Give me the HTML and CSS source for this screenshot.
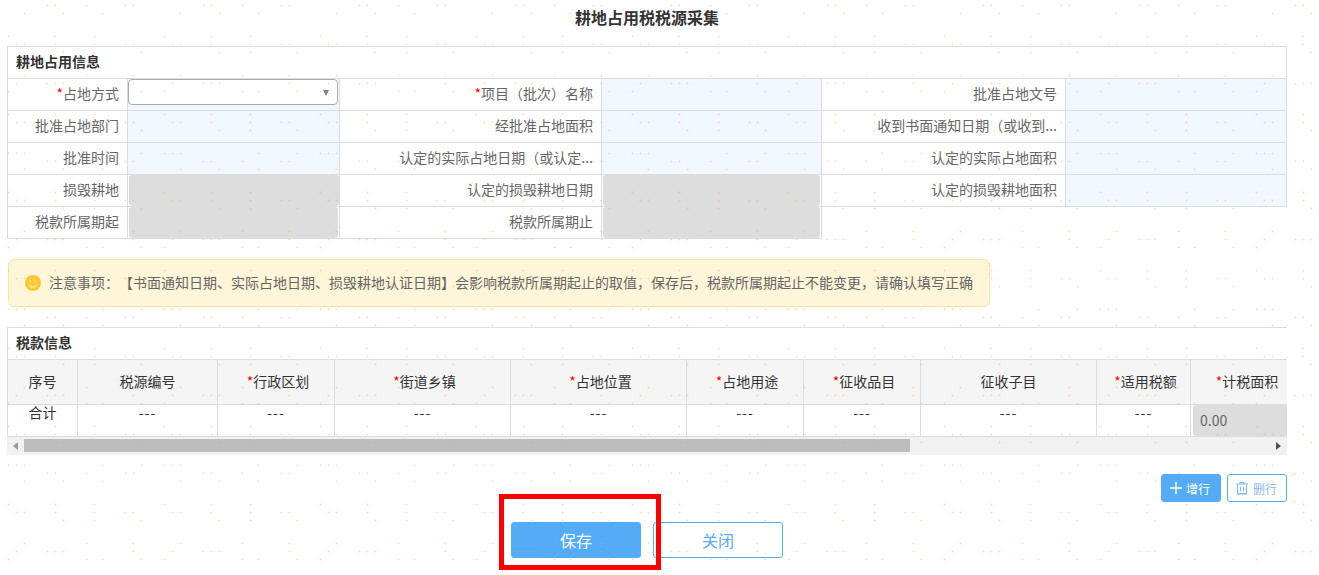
FILE: index.html
```html
<!DOCTYPE html>
<html lang="zh-CN">
<head>
<meta charset="utf-8">
<title>耕地占用税税源采集</title>
<link rel="stylesheet" href="styles.css">
</head>
<body>
<div class="page">
  <h1 class="page-title">耕地占用税税源采集</h1>

  <section class="form-section">
    <h2 class="section-title boxed">耕地占用信息</h2>
    <div class="form-grid">
      <div class="label"><i class="req">*</i>占地方式</div>
      <div class="field field-blue">
        <div class="select"><span class="select-arrow"></span></div>
      </div>
      <div class="label"><i class="req">*</i>项目（批次）名称</div>
      <div class="field field-blue"></div>
      <div class="label">批准占地文号</div>
      <div class="field field-blue"></div>

      <div class="label">批准占地部门</div>
      <div class="field field-blue"></div>
      <div class="label">经批准占地面积</div>
      <div class="field field-blue"></div>
      <div class="label">收到书面通知日期（或收到...</div>
      <div class="field field-blue"></div>

      <div class="label">批准时间</div>
      <div class="field field-blue"></div>
      <div class="label">认定的实际占地日期（或认定...</div>
      <div class="field field-blue"></div>
      <div class="label">认定的实际占地面积</div>
      <div class="field field-blue"></div>

      <div class="label">损毁耕地</div>
      <div class="field"><div class="disabled"></div></div>
      <div class="label">认定的损毁耕地日期</div>
      <div class="field"><div class="disabled inset"></div></div>
      <div class="label">认定的损毁耕地面积</div>
      <div class="field field-blue"></div>

      <div class="label">税款所属期起</div>
      <div class="field"><div class="disabled inset"></div></div>
      <div class="label">税款所属期止</div>
      <div class="field"><div class="disabled inset"></div></div>
    </div>
  </section>

  <div class="notice">
    <svg class="smile" viewBox="0 0 16 16" width="16" height="16" aria-hidden="true">
      <circle cx="8" cy="8" r="8" fill="#fcc832"/>
      <circle cx="5.300" cy="6" r="1" fill="#ffe9a8"/>
      <circle cx="10.700" cy="6" r="1" fill="#ffe9a8"/>
      <path d="M4 9.400c.9 1.800 2.400 2.700 4 2.700s3.100-.9 4-2.700" fill="none" stroke="#ffe9a8" stroke-width="1.100" stroke-linecap="round"/>
    </svg>
    <span>注意事项：【书面通知日期、实际占地日期、损毁耕地认证日期】会影响税款所属期起止的取值，保存后，税款所属期起止不能变更，请确认填写正确</span>
  </div>

  <section class="tax-section">
    <h2 class="section-title open">税款信息</h2>
    <div class="table-clip">
      <div class="tax-grid">
        <div class="th">序号</div>
        <div class="th">税源编号</div>
        <div class="th"><i class="req">*</i>行政区划</div>
        <div class="th"><i class="req">*</i>街道乡镇</div>
        <div class="th"><i class="req">*</i>占地位置</div>
        <div class="th"><i class="req">*</i>占地用途</div>
        <div class="th"><i class="req">*</i>征收品目</div>
        <div class="th">征收子目</div>
        <div class="th"><i class="req">*</i>适用税额</div>
        <div class="th"><i class="req">*</i>计税面积</div>

        <div class="td">合计</div>
        <div class="td dash">---</div>
        <div class="td dash">---</div>
        <div class="td dash">---</div>
        <div class="td dash">---</div>
        <div class="td dash">---</div>
        <div class="td dash">---</div>
        <div class="td dash">---</div>
        <div class="td dash">---</div>
        <div class="td td-input"><div class="disabled amount">0.00</div></div>
      </div>
    </div>
    <div class="scrollbar">
      <span class="scroll-btn"><span class="arrow-left"></span></span>
      <div class="scroll-track"><div class="scroll-thumb"></div></div>
      <span class="scroll-btn"><span class="arrow-right"></span></span>
    </div>
  </section>

  <div class="row-actions">
    <button class="mini-btn mini-primary" type="button">
      <svg viewBox="0 0 12 12" width="12" height="12" aria-hidden="true"><path d="M6 0v12M0 6h12" fill="none" stroke="#fff" stroke-width="1.400"/></svg>
      增行
    </button>
    <button class="mini-btn mini-outline" type="button">
      <svg viewBox="0 0 14 14" width="14" height="14" aria-hidden="true"><path d="M1 3h12M5 3V1.500h4V3M2.500 3v10h9V3M5.500 6v4.500M8.500 6v4.500M2.500 12.500h9" fill="none" stroke="#7dbcf5" stroke-width="1.100"/></svg>
      删行
    </button>
  </div>

  <div class="footer-actions">
    <div class="save-wrap">
      <button class="btn btn-primary" type="button">保存</button>
      <div class="highlight"></div>
    </div>
    <button class="btn btn-outline" type="button">关闭</button>
  </div>
</div>

<svg class="watermark" width="100%" height="100%" aria-hidden="true">
  <defs>
    <g id="dot">
      <path d="M-1 0h1v1h-1zM1 0h1v1h-1zM0 -1h1v1h-1zM0 1h1v1h-1z" fill="#ff965a" fill-opacity=".14"/>
      <path d="M0 0h1v1h-1z" fill="#ff965a" fill-opacity=".38"/>
    </g>
    <pattern id="dots" width="156" height="156" patternUnits="userSpaceOnUse">
      <use href="#dot" x="47" y="5"/><use href="#dot" x="55" y="5"/><use href="#dot" x="86" y="5"/><use href="#dot" x="125" y="5"/><use href="#dot" x="133" y="5"/>
      <use href="#dot" x="24" y="13"/><use href="#dot" x="63" y="13"/><use href="#dot" x="102" y="13"/>
      <use href="#dot" x="8" y="36"/><use href="#dot" x="55" y="36"/><use href="#dot" x="94" y="36"/>
      <use href="#dot" x="16" y="44"/><use href="#dot" x="24" y="44"/><use href="#dot" x="55" y="44"/><use href="#dot" x="94" y="44"/><use href="#dot" x="125" y="44"/><use href="#dot" x="133" y="44"/>
      <use href="#dot" x="63" y="52"/><use href="#dot" x="94" y="52"/><use href="#dot" x="141" y="52"/>
      <use href="#dot" x="24" y="75"/><use href="#dot" x="86" y="75"/><use href="#dot" x="133" y="75"/>
      <use href="#dot" x="16" y="83"/><use href="#dot" x="47" y="83"/><use href="#dot" x="55" y="83"/><use href="#dot" x="63" y="83"/><use href="#dot" x="133" y="83"/>
      <use href="#dot" x="8" y="91"/><use href="#dot" x="86" y="91"/><use href="#dot" x="102" y="91"/><use href="#dot" x="141" y="91"/>
      <use href="#dot" x="8" y="114"/><use href="#dot" x="55" y="114"/><use href="#dot" x="94" y="114"/>
      <use href="#dot" x="16" y="122"/><use href="#dot" x="24" y="122"/><use href="#dot" x="55" y="122"/><use href="#dot" x="94" y="122"/><use href="#dot" x="125" y="122"/><use href="#dot" x="133" y="122"/>
      <use href="#dot" x="63" y="130"/><use href="#dot" x="94" y="130"/><use href="#dot" x="141" y="130"/>
      <use href="#dot" x="8" y="153"/><use href="#dot" x="16" y="153"/><use href="#dot" x="24" y="153"/><use href="#dot" x="102" y="153"/><use href="#dot" x="141" y="153"/>
    </pattern>
  </defs>
  <rect width="100%" height="100%" fill="url(#dots)" shape-rendering="crispEdges"/>
</svg>
</body>
</html>
```

FILE: styles.css
```css
* {
  box-sizing: border-box;
}

html,
body {
  margin: 0;
  height: 100%;
  overflow: hidden;
  background: #fff;
}

body {
  position: relative;
  font-family: "Noto Sans CJK SC", "Noto Sans", sans-serif;
  font-size: 14px;
  color: #666;
  text-spacing-trim: space-all;
}

.page {
  width: 1280px;
  margin-left: 7px;
}

.page-title {
  margin: 0;
  height: 46px;
  padding-bottom: 10px;
  font-size: 16px;
  font-weight: 700;
  line-height: 34px;
  text-align: center;
  color: #333;
}

.section-title {
  margin: 0;
  height: 33px;
  padding-left: 8px;
  font-size: 14px;
  font-weight: 700;
  line-height: 29px;
  color: #333;
  border: 1px solid #ddd;
}

.section-title.open {
  border-right: 0;
}

.req {
  font-style: normal;
  color: #f00;
}

.form-grid {
  display: grid;
  grid-template-columns: 120px 212px 262px 220px 244px 221px;
  grid-auto-rows: 32px;
  border-left: 1px solid #ddd;
}

.label {
  padding-right: 8px;
  line-height: 28px;
  text-align: right;
  white-space: nowrap;
  overflow: hidden;
  border-right: 1px solid #ddd;
  border-bottom: 1px solid #ddd;
}

.field {
  display: flex;
  border-right: 1px solid #ddd;
  border-bottom: 1px solid #ddd;
}

.field-blue {
  background: #f0f7ff;
}

.select {
  position: relative;
  width: 210px;
  height: 26px;
  background: #fff;
  border: 1px solid #aaa;
  border-radius: 4px;
}

.select-arrow {
  position: absolute;
  top: 10px;
  right: 8px;
  border-top: 6px solid #808080;
  border-left: 3px solid transparent;
  border-right: 3px solid transparent;
}

.disabled {
  flex: 1;
  margin-left: 1px;
  background: #ddd;
  border-radius: 3px;
}

.disabled.inset {
  margin-right: 1px;
}

.notice {
  display: flex;
  align-items: center;
  gap: 8px;
  width: 982px;
  height: 48px;
  margin: 20px 0 20px 1px;
  padding-left: 16px;
  line-height: 46px;
  background: #fff5d8;
  border: 1px solid #fbe5a3;
  border-radius: 6px;
}

.notice span {
  position: relative;
  top: -1px;
}

.smile {
  flex: none;
}

.table-clip {
  overflow: hidden;
  border-left: 1px solid #ddd;
}

.tax-grid {
  display: grid;
  grid-template-columns: 70px 140px 117px 176px 176px 117px 117px 176px 94px 109px;
  grid-template-rows: 45px 32px;
  width: 1300px;
}

.th,
.td {
  color: #333;
  text-align: center;
  white-space: nowrap;
  border-right: 1px solid #ddd;
  border-bottom: 1px solid #ddd;
}

.th {
  line-height: 42px;
  background: #f5f5f5;
}

.th .req {
  margin-left: 4px;
}

.td {
  line-height: 15px;
}

.td-input {
  display: flex;
  border-right: 0;
}

.dash {
  letter-spacing: 1px;
}

.amount {
  margin-left: 2px;
  padding-left: 7px;
  color: #666;
  line-height: 30px;
  text-align: left;
}

.scrollbar {
  display: flex;
  height: 18px;
  background: #f1f1f1;
}

.scroll-btn {
  flex: none;
  display: flex;
  align-items: center;
  justify-content: center;
  width: 17px;
  height: 18px;
}

.arrow-left {
  border-right: 5px solid #999;
  border-top: 4px solid transparent;
  border-bottom: 4px solid transparent;
}

.arrow-right {
  border-left: 5px solid #505050;
  border-top: 4px solid transparent;
  border-bottom: 4px solid transparent;
}

.scroll-track {
  flex: 1;
  padding-top: 2px;
}

.scroll-thumb {
  width: 886px;
  height: 13px;
  background: #bdbdbd;
}

.row-actions {
  display: flex;
  justify-content: flex-end;
  gap: 6px;
  margin-top: 19px;
}

.mini-btn {
  display: flex;
  align-items: center;
  justify-content: center;
  gap: 4px;
  width: 60px;
  height: 28px;
  padding: 0 2px 0 0;
  font-family: inherit;
  font-size: 12px;
  border-radius: 3px;
}

.mini-primary {
  color: #fff;
  background: #55acf6;
  border: 1px solid #55acf6;
}

.mini-outline {
  color: #8fb6ee;
  background: #fff;
  border: 1px solid #55acf6;
}

.footer-actions {
  display: flex;
  justify-content: center;
  gap: 12px;
  margin-top: 20px;
}

.save-wrap {
  position: relative;
}

.btn {
  display: block;
  width: 130px;
  height: 36px;
  padding: 0;
  font-family: inherit;
  font-size: 16px;
  border-radius: 3px;
}

.btn-primary {
  color: #fff;
  background: #55acf6;
  border: 1px solid #55acf6;
}

.btn-outline {
  color: #55acf6;
  background: #fff;
  border: 1px solid #55acf6;
}

.highlight {
  position: absolute;
  top: -28px;
  left: -12px;
  z-index: 3;
  width: 162px;
  height: 76px;
  border: 5px solid #f00;
}

.watermark {
  position: absolute;
  top: 0;
  left: 0;
  z-index: 2;
  pointer-events: none;
}
```
